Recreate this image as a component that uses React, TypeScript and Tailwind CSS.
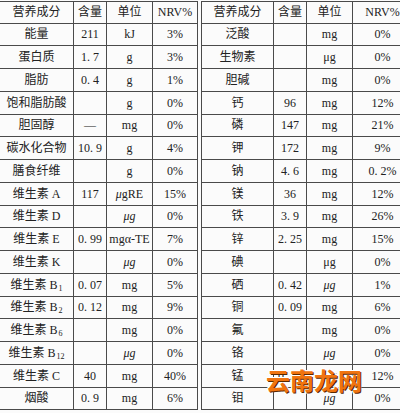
import React from "react";

type Row = {
	name: React.ReactNode;
	amount: string;
	unit: React.ReactNode;
	nrv: string;
};

const mu = <span className="italic">μg</span>;

const Sub = ({ n }: { n: string }) => (
	<sub className="text-[8px] ml-[1px]">{n}</sub>
);

const leftRows: Row[] = [
	{ name: "能量", amount: "211", unit: "kJ", nrv: "3%" },
	{ name: "蛋白质", amount: "1. 7", unit: "g", nrv: "3%" },
	{ name: "脂肪", amount: "0. 4", unit: "g", nrv: "1%" },
	{ name: "饱和脂肪酸", amount: "", unit: "g", nrv: "0%" },
	{ name: "胆固醇", amount: "—", unit: "mg", nrv: "0%" },
	{ name: "碳水化合物", amount: "10. 9", unit: "g", nrv: "4%" },
	{ name: "膳食纤维", amount: "", unit: "g", nrv: "0%" },
	{
		name: "维生素 A",
		amount: "117",
		unit: (
			<span>
				<span className="italic">μ</span>gRE
			</span>
		),
		nrv: "15%",
	},
	{ name: "维生素 D", amount: "", unit: mu, nrv: "0%" },
	{ name: "维生素 E", amount: "0. 99", unit: "mgα-TE", nrv: "7%" },
	{ name: "维生素 K", amount: "", unit: mu, nrv: "0%" },
	{
		name: (
			<span>
				维生素 B<Sub n="1" />
			</span>
		),
		amount: "0. 07",
		unit: "mg",
		nrv: "5%",
	},
	{
		name: (
			<span>
				维生素 B<Sub n="2" />
			</span>
		),
		amount: "0. 12",
		unit: "mg",
		nrv: "9%",
	},
	{
		name: (
			<span>
				维生素 B<Sub n="6" />
			</span>
		),
		amount: "",
		unit: "mg",
		nrv: "0%",
	},
	{
		name: (
			<span>
				维生素 B<Sub n="12" />
			</span>
		),
		amount: "",
		unit: mu,
		nrv: "0%",
	},
	{ name: "维生素 C", amount: "40", unit: "mg", nrv: "40%" },
	{ name: "烟酸", amount: "0. 9", unit: "mg", nrv: "6%" },
];

const rightRows: Row[] = [
	{ name: "泛酸", amount: "", unit: "mg", nrv: "0%" },
	{ name: "生物素", amount: "", unit: "μg", nrv: "0%" },
	{ name: "胆碱", amount: "", unit: "mg", nrv: "0%" },
	{ name: "钙", amount: "96", unit: "mg", nrv: "12%" },
	{ name: "磷", amount: "147", unit: "mg", nrv: "21%" },
	{ name: "钾", amount: "172", unit: "mg", nrv: "9%" },
	{ name: "钠", amount: "4. 6", unit: "mg", nrv: "0. 2%" },
	{ name: "镁", amount: "36", unit: "mg", nrv: "12%" },
	{ name: "铁", amount: "3. 9", unit: "mg", nrv: "26%" },
	{ name: "锌", amount: "2. 25", unit: "mg", nrv: "15%" },
	{ name: "碘", amount: "", unit: "μg", nrv: "0%" },
	{ name: "硒", amount: "0. 42", unit: mu, nrv: "1%" },
	{ name: "铜", amount: "0. 09", unit: "mg", nrv: "6%" },
	{ name: "氟", amount: "", unit: "mg", nrv: "0%" },
	{ name: "铬", amount: "", unit: mu, nrv: "0%" },
	{ name: "锰", amount: "0. 27", unit: "mg", nrv: "12%" },
	{ name: "钼", amount: "", unit: mu, nrv: "0%" },
];

function NutritionTable({
	rows,
	cols,
	className,
}: {
	rows: Row[];
	cols: string;
	className: string;
}) {
	const cell = "flex items-center justify-center border-r border-[#4a4a4a] whitespace-nowrap";
	return (
		<div className={`border-t border-[#4a4a4a] ${className}`}>
			<div className={`grid ${cols} h-[21.5px] border-b border-[#4a4a4a]`}>
				<div className={cell}>营养成分</div>
				<div className={cell}>含量</div>
				<div className={cell}>单位</div>
				<div className={cell}>NRV%</div>
			</div>
			{rows.map((r, i) => (
				<div
					key={i}
					className={`grid ${cols} h-[22.75px] border-b border-[#4a4a4a]`}
				>
					<div className={cell}>{r.name}</div>
					<div className={cell}>{r.amount}</div>
					<div className={cell}>{r.unit}</div>
					<div className={cell}>{r.nrv}</div>
				</div>
			))}
		</div>
	);
}

export default function App() {
	return (
		<div
			className="relative w-[400px] h-[413px] overflow-hidden bg-[#fbfbfb] text-[12px] leading-none text-[#222]"
			style={{ fontFamily: '"Liberation Serif", "Noto Sans CJK SC", serif' }}
		>
			<div className="flex pt-px">
				<NutritionTable
					rows={leftRows}
					cols="grid-cols-[74px_33px_46px_45px]"
					className="w-[198px] shrink-0"
				/>
				<div className="w-[3px] shrink-0" />
				<NutritionTable
					rows={rightRows}
					cols="grid-cols-[72px_33px_46px_60px]"
					className="w-[212px] shrink-0 border-l"
				/>
			</div>

			{/* 水印 */}
			<div
				className="absolute left-[266px] top-[368px] text-[24px] font-bold leading-none text-[#f07410] [text-shadow:1px_1px_0_#5a2800,-1px_-1px_0_#ffffff,1px_-1px_0_#ffffff,-1px_1px_0_#ffffff]"
				style={{ fontFamily: '"Noto Sans CJK SC", sans-serif' }}
			>
				云南龙网
			</div>
		</div>
	);
}
